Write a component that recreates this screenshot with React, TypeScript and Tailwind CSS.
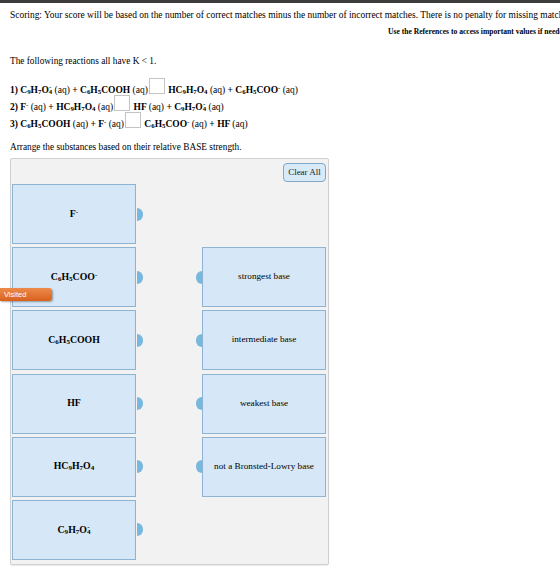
import React from 'react';

// subscript / superscript helpers for chemical formulas
const Sb = ({ children }: { children: React.ReactNode }) => (
  <sub className="text-[0.72em] relative top-[0.15em] leading-none align-baseline">{children}</sub>
);
const Sp = ({ children }: { children: React.ReactNode }) => (
  <sup className="text-[0.7em] relative -top-[0.45em] leading-none align-baseline">{children}</sup>
);
// subscript with a charge stacked above it
const SbSp = ({ sub, sup }: { sub: string; sup: string }) => (
  <span className="relative inline-block text-[0.72em] leading-none">
    <span className="relative top-[0.2em]">{sub}</span>
    <span className="absolute left-[0.05em] -top-[0.55em]">{sup}</span>
  </span>
);

const Blank = () => (
  <span className="inline-block w-[16px] h-[16px] border border-[#c4c4c4] bg-white align-[-1px] mx-[1px]" />
);

const Tab = ({ side }: { side: 'right' | 'left' }) => (
  <span
    className={
      side === 'right'
        ? 'block w-[6px] h-[13px] bg-[#78b8de] rounded-r-full'
        : 'block w-[6px] h-[13px] bg-[#78b8de] rounded-l-full'
    }
  />
);

const substances: React.ReactNode[] = [
  <>F<Sp>-</Sp></>,
  <>C<Sb>6</Sb>H<Sb>5</Sb>COO<Sp>-</Sp></>,
  <>C<Sb>6</Sb>H<Sb>5</Sb>COOH</>,
  <>HF</>,
  <>HC<Sb>9</Sb>H<Sb>7</Sb>O<Sb>4</Sb></>,
  <>C<Sb>9</Sb>H<Sb>7</Sb>O<SbSp sub="4" sup="-" /></>,
];

const targets = ['strongest base', 'intermediate base', 'weakest base', 'not a Bronsted-Lowry base'];

export default function App() {
  return (
    <div className="relative w-[560px] h-[576px] overflow-hidden bg-white text-black font-['Liberation_Serif',serif]">
      <div className="h-[3px] bg-[#3c3c3c]" />

      <div className="pl-[10px] pt-[6px] text-[9.45px] leading-[12px] whitespace-nowrap">
        Scoring: Your score will be based on the number of correct matches minus the number of incorrect matches. There is no penalty for missing matches.
      </div>
      <div className="mt-[6px] pl-[388px] text-[7.6px] leading-[10px] font-bold whitespace-nowrap">
        Use the References to access important values if needed for this question.
      </div>

      <div className="pl-[10px] mt-[18px] text-[9.3px] leading-[12px]">The following reactions all have K &lt; 1.</div>

      <div className="pl-[10px] mt-[13px] text-[9.5px] font-bold flex flex-col whitespace-nowrap">
        <div className="h-[17px] flex items-end">
          <span>
            1) C<Sb>9</Sb>H<Sb>7</Sb>O<SbSp sub="4" sup="-" /> <span className="font-normal">(aq)</span> + C<Sb>6</Sb>H<Sb>5</Sb>COOH{' '}
            <span className="font-normal">(aq)</span>
            <Blank /> HC<Sb>9</Sb>H<Sb>7</Sb>O<Sb>4</Sb> <span className="font-normal">(aq)</span> + C<Sb>6</Sb>H<Sb>5</Sb>COO<Sp>-</Sp>{' '}
            <span className="font-normal">(aq)</span>
          </span>
        </div>
        <div className="h-[17px] flex items-end">
          <span>
            2) F<Sp>-</Sp> <span className="font-normal">(aq)</span> + HC<Sb>9</Sb>H<Sb>7</Sb>O<Sb>4</Sb>{' '}
            <span className="font-normal">(aq)</span>
            <Blank /> HF <span className="font-normal">(aq)</span> + C<Sb>9</Sb>H<Sb>7</Sb>O<SbSp sub="4" sup="-" />{' '}
            <span className="font-normal">(aq)</span>
          </span>
        </div>
        <div className="h-[17px] flex items-end">
          <span>
            3) C<Sb>6</Sb>H<Sb>5</Sb>COOH <span className="font-normal">(aq)</span> + F<Sp>-</Sp>{' '}
            <span className="font-normal">(aq)</span>
            <Blank /> C<Sb>6</Sb>H<Sb>5</Sb>COO<Sp>-</Sp> <span className="font-normal">(aq)</span> + HF{' '}
            <span className="font-normal">(aq)</span>
          </span>
        </div>
      </div>

      <div className="pl-[10px] mt-[10px] text-[9.3px] leading-[12px]">
        Arrange the substances based on their relative BASE strength.
      </div>

      {/* matching panel */}
      <div className="ml-[10px] mt-[5px] w-[319px] h-[407px] bg-[#f2f2f2] border border-[#d0d0d0] rounded-[2px] shadow-[0_1px_1px_rgba(0,0,0,0.08)]">
        <div className="flex justify-end pt-[4px] pr-[2px]">
          <button className="w-[43px] h-[19px] bg-[#d8e9f7] border border-[#7fa9c9] rounded-[4px] text-[9px] text-[#222] font-['Liberation_Serif',serif]">
            Clear All
          </button>
        </div>

        <div className="mt-[2px] ml-[1px] w-[314px] grid grid-cols-[124px_1fr_124px] grid-rows-[repeat(6,60px)] gap-y-[3.2px]">
          {substances.map((s, i) => (
            <div key={i} className="col-start-1 flex items-center" style={{ gridRow: i + 1 }}>
              <div className="w-[124px] h-full flex items-center justify-center bg-[#d6e8f7] border border-[#8db5d3] text-[9.8px] font-bold">
                <span>{s}</span>
              </div>
            </div>
          ))}
          {substances.map((_, i) => (
            <div key={'t' + i} className="col-start-2 flex items-center justify-between pl-[1px]" style={{ gridRow: i + 1 }}>
              <Tab side="right" />
              {i >= 1 && i <= 4 ? <Tab side="left" /> : null}
            </div>
          ))}
          {targets.map((t, i) => (
            <div
              key={t}
              className="col-start-3 flex items-center justify-center bg-[#d6e8f7] border border-[#8db5d3] text-[9.2px]"
              style={{ gridRow: i + 2 }}
            >
              {t}
            </div>
          ))}
        </div>
      </div>

      {/* visited flag */}
      <div className="absolute left-0 top-[288px] w-[52px] h-[13px] rounded-r-[3px] bg-gradient-to-b from-[#ec8a4a] to-[#d9611d] shadow-[1px_1px_2px_rgba(0,0,0,0.35)] flex items-center pl-[4px]">
        <span className="text-white text-[7.5px] font-['Liberation_Sans',sans-serif]">Visited</span>
      </div>
    </div>
  );
}
